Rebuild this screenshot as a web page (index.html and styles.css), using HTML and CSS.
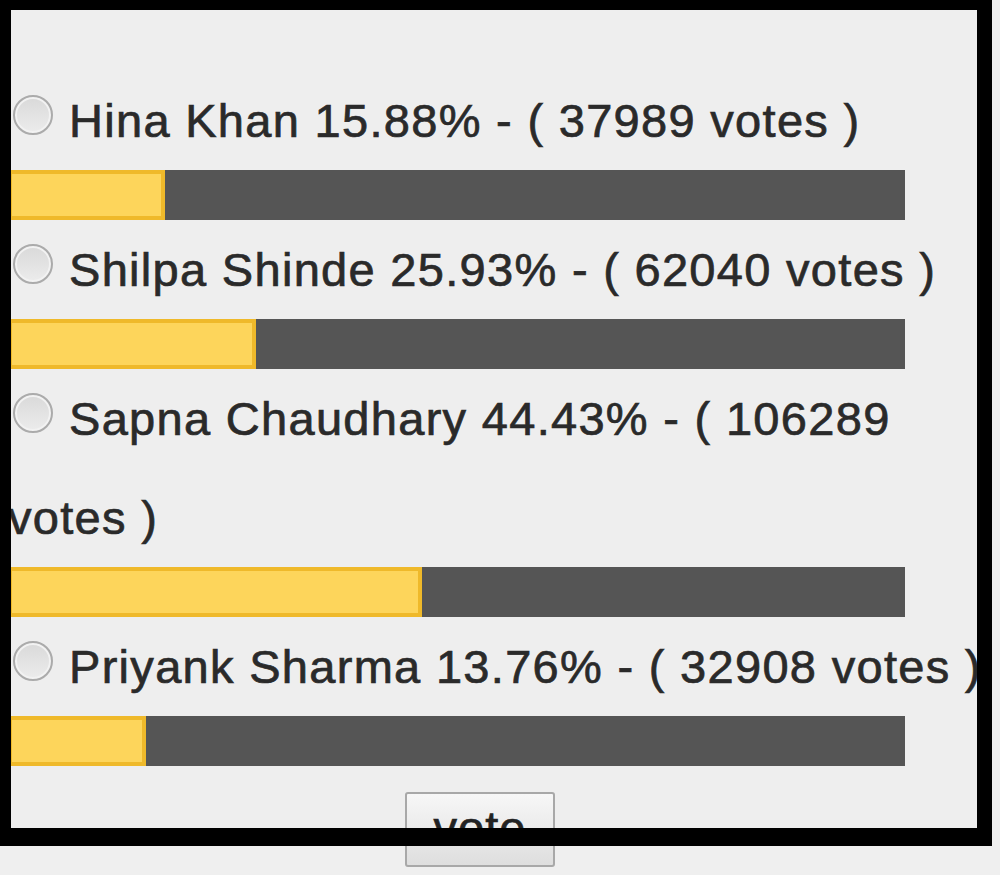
FILE: index.html
```html
<!DOCTYPE html>
<html lang="en">
<head>
<meta charset="utf-8">
<title>Poll</title>
<link rel="stylesheet" href="styles.css">
</head>
<body>
<div class="page">
  <form class="poll">
    <label class="option"><input type="radio" name="poll" class="radio">Hina Khan 15.88% - ( 37989 votes )</label>
    <div class="bar"><div class="fill" style="--pct:15.88%"></div></div>

    <label class="option"><input type="radio" name="poll" class="radio">Shilpa Shinde 25.93% - ( 62040 votes )</label>
    <div class="bar"><div class="fill" style="--pct:25.93%"></div></div>

    <label class="option"><input type="radio" name="poll" class="radio">Sapna Chaudhary 44.43% - ( 106289 votes )</label>
    <div class="bar"><div class="fill" style="--pct:44.43%"></div></div>

    <label class="option"><input type="radio" name="poll" class="radio">Priyank Sharma 13.76% - ( 32908 votes )</label>
    <div class="bar"><div class="fill" style="--pct:13.76%"></div></div>

    <div class="actions">
      <button type="button" class="vote-btn">vote</button>
    </div>
  </form>
  <div class="frame"></div>
</div>
</body>
</html>
```
FILE: styles.css
```css
html, body {
  margin: 0;
  padding: 0;
}

body {
  background: #efefef;
  overflow: hidden;
  font-family: "Liberation Sans", Arial, sans-serif;
  color: #2a2a2a;
}

.page {
  position: relative;
  width: 1000px;
  height: 875px;
}

.poll {
  box-sizing: border-box;
  width: 992px;
  padding: 71px 0 0 8px;
  background: #eeeeee;
  height: 846px;
}

.option {
  display: block;
  font-size: 47px;
  line-height: 99px;
  letter-spacing: 1.3px;
  -webkit-text-stroke: 0.7px #2a2a2a;
}

.radio {
  appearance: none;
  -webkit-appearance: none;
  box-sizing: border-box;
  display: inline-block;
  width: 40px;
  height: 40px;
  margin: 0 16px 2px 5px;
  border: 2px solid #ababab;
  border-radius: 50%;
  background: linear-gradient(#d9d9d9, #ececec);
  box-shadow: inset 0 0 0 2px #f2f2f2;
  vertical-align: baseline;
}

.bar {
  width: 897px;
  height: 50px;
  background: #555555;
}

.fill {
  box-sizing: border-box;
  width: calc(var(--pct) + 15px);
  height: 100%;
  background: #fdd55b;
  border: 4px solid #efb92a;
}

.actions {
  padding: 26px 0 0 397px;
}

.vote-btn {
  box-sizing: border-box;
  width: 150px;
  height: 75px;
  margin: 0;
  padding: 0 0 4px;
  font-family: "Liberation Sans", Arial, sans-serif;
  font-size: 47px;
  letter-spacing: 1px;
  color: #222222;
  -webkit-text-stroke: 0.7px #222222;
  border: 2px solid #a8a8a8;
  border-radius: 3px;
  background: linear-gradient(#f7f7f7, #dedede);
}

/* black outline drawn over the poll box */
.frame {
  position: absolute;
  top: 0;
  left: 0;
  box-sizing: border-box;
  width: 992px;
  height: 846px;
  border-style: solid;
  border-color: #000000;
  border-width: 10px 15px 18px 11px;
  pointer-events: none;
}
```
